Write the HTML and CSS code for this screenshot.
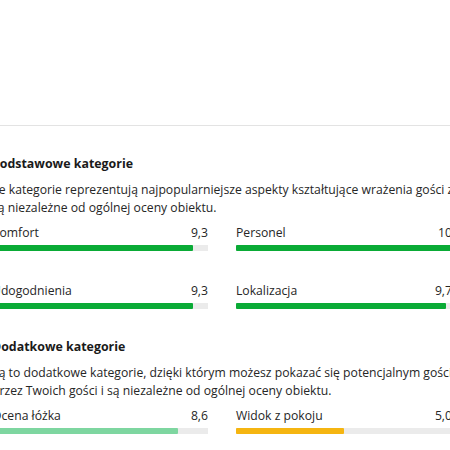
FILE: index.html
```html
<!DOCTYPE html>
<html lang="pl">
<head>
<meta charset="utf-8">
<link rel="stylesheet" href="styles.css">
</head>
<body>
<div class="page">
  <section class="group">
    <h2 class="group-title">Podstawowe kategorie</h2>
    <p class="group-desc">Te kategorie reprezentują najpopularniejsze aspekty kształtujące wrażenia gości z pobytu i<br>są niezależne od ogólnej oceny obiektu.</p>
    <div class="grid">
      <div class="score">
        <div class="score-head"><span>Komfort</span><span>9,3</span></div>
        <div class="track"><div class="fill fill-green" style="width:93%"></div></div>
      </div>
      <div class="score">
        <div class="score-head"><span>Personel</span><span>10</span></div>
        <div class="track"><div class="fill fill-green" style="width:100%"></div></div>
      </div>
      <div class="score">
        <div class="score-head"><span>Udogodnienia</span><span>9,3</span></div>
        <div class="track"><div class="fill fill-green" style="width:93%"></div></div>
      </div>
      <div class="score">
        <div class="score-head"><span>Lokalizacja</span><span>9,7</span></div>
        <div class="track"><div class="fill fill-green" style="width:97%"></div></div>
      </div>
    </div>
  </section>
  <section class="group group-extra">
    <h2 class="group-title">Dodatkowe kategorie</h2>
    <p class="group-desc">Są to dodatkowe kategorie, dzięki którym możesz pokazać się potencjalnym gościom. Są oceniane<br>przez Twoich gości i są niezależne od ogólnej oceny obiektu.</p>
    <div class="grid">
      <div class="score">
        <div class="score-head"><span>Ocena łóżka</span><span>8,6</span></div>
        <div class="track"><div class="fill fill-light" style="width:86%"></div></div>
      </div>
      <div class="score">
        <div class="score-head"><span>Widok z pokoju</span><span>5,0</span></div>
        <div class="track"><div class="fill fill-yellow" style="width:50%"></div></div>
      </div>
    </div>
  </section>
</div>
</body>
</html>
```
FILE: styles.css
```css
html, body {
  margin: 0;
  padding: 0;
  background: #fff;
  overflow: hidden;
}
body {
  font-family: "Open Sans", "Noto Sans", sans-serif;
  color: #262626;
  font-size: 12.2px;
}
.page {
  width: 460px;
  margin-left: -8px;
  padding-top: 125px;
}
.group {
  border-top: 1px solid #e3e3e3;
  padding-top: 28px;
}
.group-extra {
  border-top: none;
  padding-top: 28px;
}
.group-title {
  margin: 0;
  font-size: 12.4px;
  line-height: 20px;
  font-weight: 700;
  color: #1a1a1a;
}
.group-desc {
  margin: 7px 0 0;
  line-height: 18px;
  white-space: nowrap;
}
.grid {
  display: grid;
  grid-template-columns: 216px 216px;
  column-gap: 28px;
  row-gap: 31px;
  margin-top: 7px;
}
.score-head {
  display: flex;
  justify-content: space-between;
  line-height: 18px;
}
.track {
  margin-top: 3px;
  height: 6px;
  background: #ebebeb;
}
.fill {
  height: 100%;
  border-radius: 1px;
}
.fill-green { background: #0aab36; }
.fill-light { background: #7ed6a0; }
.fill-yellow { background: #f5b511; }
```
